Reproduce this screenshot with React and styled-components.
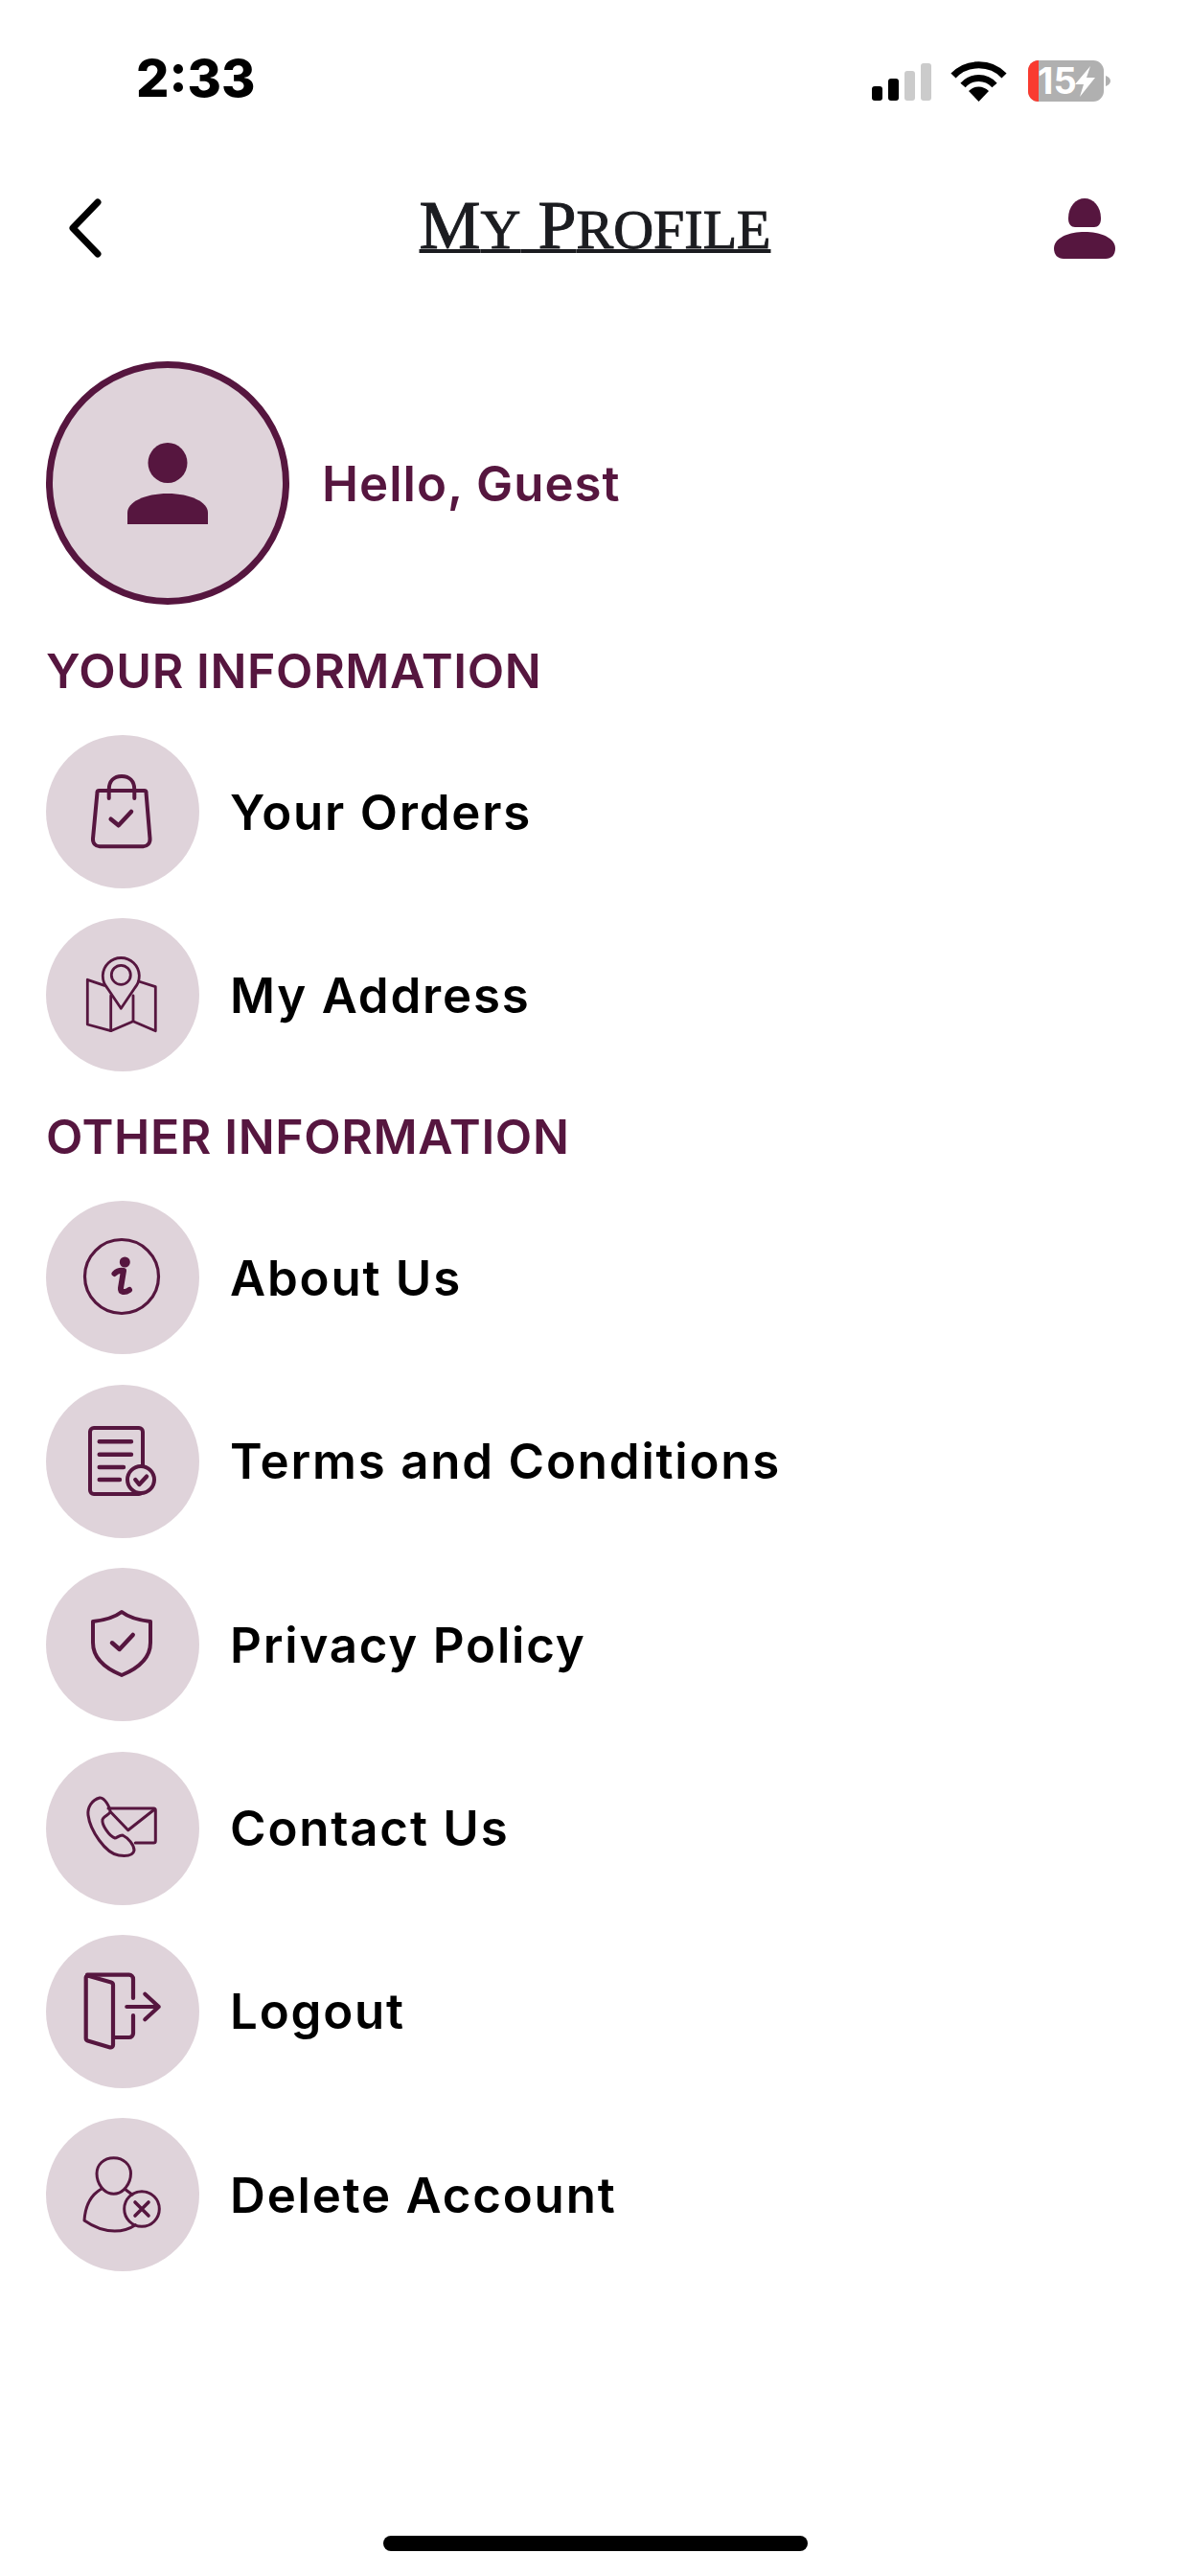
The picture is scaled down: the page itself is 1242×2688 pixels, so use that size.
import React from "react";
import styled, { createGlobalStyle } from "styled-components";

const plum = "#56163f";
const tint = "#dfd3da";

const GlobalStyle = createGlobalStyle`
  html, body {
    margin: 0;
    padding: 0;
    background: #fff;
  }
`;

const Page = styled.div`
  width: 1242px;
  height: 2688px;
  background: #fff;
  display: flex;
  flex-direction: column;
  overflow: hidden;
  font-family: Inter, "Liberation Sans", sans-serif;
`;

const StatusBar = styled.div`
  height: 120px;
  padding: 60px 82px 0 142px;
  box-sizing: border-box;
  display: flex;
  justify-content: space-between;
  align-items: flex-start;
`;

const Clock = styled.div`
  font-size: 54px;
  line-height: 44px;
  font-weight: 800;
  color: #000;
`;

const StatusIcons = styled.svg`
  width: 255px;
  height: 50px;
  display: block;
`;

const Header = styled.div`
  height: 170px;
  padding: 0 78px;
  margin-top: 87px;
  box-sizing: border-box;
  display: grid;
  grid-template-columns: 1fr auto 1fr;
  align-items: start;
`;

const BackIcon = styled.svg`
  display: block;
  margin-left: -8px;
`;

const HeaderEnd = styled.div`
  justify-self: end;
`;

const Title = styled.h1`
  margin: 0;
  font-family: "Liberation Serif", serif;
  font-weight: 400;
  font-size: 72px;
  line-height: 56px;
  color: #1b1c20;
  -webkit-text-stroke: 1px #1b1c20;
  text-decoration: underline;
  text-decoration-thickness: 4px;
  text-underline-offset: 1px;
  text-decoration-skip-ink: none;
`;

const SmallCap = styled.span`
  font-size: 58px;
  text-transform: uppercase;
`;

const Content = styled.div`
  padding: 0 48px;
  display: flex;
  flex-direction: column;
`;

const ProfileRow = styled.div`
  display: flex;
  align-items: center;
  gap: 34px;
`;

const Avatar = styled.div`
  width: 254px;
  height: 254px;
  box-sizing: border-box;
  border: 7px solid ${plum};
  border-radius: 50%;
  background: ${tint};
  display: flex;
  align-items: center;
  justify-content: center;
`;

const Hello = styled.div`
  font-size: 51px;
  font-weight: 600;
  letter-spacing: 1px;
  color: ${plum};
`;

const SectionTitle = styled.h2`
  margin: 0;
  height: 58px;
  margin-top: ${(p) => p.$top}px;
  margin-bottom: 38px;
  font-size: 50px;
  line-height: 58px;
  font-weight: 570;
  letter-spacing: 0.6px;
  color: ${plum};
`;

const List = styled.div`
  display: flex;
  flex-direction: column;
  gap: 31.4px;
`;

const Row = styled.div`
  display: flex;
  align-items: center;
  gap: 32px;
`;

const IconCircle = styled.div`
  width: 160px;
  height: 160px;
  flex: none;
  border-radius: 50%;
  background: ${tint};
`;

const IconSvg = styled.svg`
  width: 160px;
  height: 160px;
  display: block;
  fill: none;
  stroke: ${plum};
  stroke-linecap: round;
  stroke-linejoin: round;
`;

const Label = styled.div`
  font-size: 51px;
  font-weight: 600;
  color: #000;
  letter-spacing: 1.8px;
`;

const HomeBar = styled.div`
  width: 443px;
  height: 16px;
  border-radius: 8px;
  background: #000;
  margin: auto auto 26px;
`;

const BagIcon = () => (
  <IconSvg viewBox="0 0 160 160" strokeWidth="4">
    <path d="M65.7 66V57C65.7 48 71 43 79 43s13.3 5 13.3 14v9" />
    <path d="M55.5 58H102.5a2 2 0 0 1 2 2L108.5 108c.4 5-3 8.2-7 8.2H56c-4 0-7.4-3.2-7-8.2l4.5-48a2 2 0 0 1 2-2z" />
    <path d="M67.7 87.7L75.7 94.3L89 80" strokeWidth="4.5" />
  </IconSvg>
);

const MapIcon = () => (
  <IconSvg viewBox="0 0 160 160" strokeWidth="2.8">
    <path d="M61 70.3L43.3 64.3V111L67.7 117.7L91 107.7L114.3 117.7V71.7L96.7 66" />
    <path d="M67.7 81V117.7M91 81V107.7" />
    <path d="M78.3 94.3L64 73A19 19 0 1 1 92.6 73Z" />
    <circle cx="78.3" cy="59.3" r="10" />
  </IconSvg>
);

const InfoIcon = () => (
  <IconSvg viewBox="0 0 160 160" strokeWidth="3.2">
    <circle cx="79" cy="79" r="38.5" />
    <circle cx="82.3" cy="64" r="5.5" fill={plum} stroke="none" />
    <path d="M71.5 76C74 73.5 78 72.5 81 73L78 91C77.5 95.5 82 96.5 87 93" strokeWidth="6" />
  </IconSvg>
);

const TermsIcon = () => (
  <IconSvg viewBox="0 0 160 160" strokeWidth="4">
    <rect x="46" y="45" width="55" height="69" rx="4" />
    <path d="M55.7 59.3H89M55.7 72.7H89M55.7 86H81M55.7 99H77" strokeWidth="4.4" />
    <circle cx="99" cy="99" r="14" fill={tint} />
    <path d="M93.3 99L97.3 104L105 95.7" strokeWidth="4.4" />
  </IconSvg>
);

const ShieldIcon = () => (
  <IconSvg viewBox="0 0 160 160" strokeWidth="4">
    <path d="M79 46C70 53 58 55 49 56V78C49 95 62 105 79 112C96 105 109 95 109 78V56C100 55 88 53 79 46Z" />
    <path d="M69 78.3L76.7 85L90.7 70" strokeWidth="4.5" />
  </IconSvg>
);

const ContactIcon = () => (
  <IconSvg viewBox="0 0 160 160" strokeWidth="3">
    <path d="M65 59H112.3a2 2 0 0 1 2 2V93a2 2 0 0 1-2 2H93.3" />
    <path d="M67.7 63L85.7 81.7L113.3 60" />
    <path d="M56 48C48 50 43 58 44 66C46 82 62 106 76 108C84 109 91 108 92 103C92 97 86 90 80 87C76 87 74 90 72 90C66 88 58 76 59 71C59 68 65 66 67 63C67 58 61 47 56 48Z" />
  </IconSvg>
);

const LogoutIcon = () => (
  <IconSvg viewBox="0 0 160 160" strokeWidth="4.2">
    <path d="M41.7 44.5a2 2 0 0 1 2.5-1.8L68 49.5a3 3 0 0 1 2 2.8V115a2.5 2.5 0 0 1-3 2.4L43.5 110.5a2.5 2.5 0 0 1-1.8-2.4Z" />
    <path d="M43 41.7H86.7a4.3 4.3 0 0 1 4.3 4.3V66" />
    <path d="M91 84V102.7a4.3 4.3 0 0 1-4.3 4.3H71.7" />
    <path d="M84.3 75H117.7M103.3 61.7L117.7 75L103.3 88.3" />
  </IconSvg>
);

const DeleteIcon = () => (
  <IconSvg viewBox="0 0 160 160" strokeWidth="3">
    <path d="M70.7 41.7C60 41.7 53 49 53 58C53 68 60 79.3 70.7 79.3C81 79.3 88.5 68 88.5 58C88.5 49 81 41.7 70.7 41.7Z" />
    <path d="M58 74C47 80 41 92 40 107C50 114 60 118 71.7 118C80 118 87 116 93.3 111.7" />
    <path d="M83.3 75L90 80" />
    <circle cx="100" cy="95" r="18.3" />
    <path d="M93 88L107 102M107 88L93 102" strokeWidth="3.6" />
  </IconSvg>
);

const infoItems = [
  { label: "Your Orders", Icon: BagIcon },
  { label: "My Address", Icon: MapIcon },
];

const otherItems = [
  { label: "About Us", Icon: InfoIcon },
  { label: "Terms and Conditions", Icon: TermsIcon },
  { label: "Privacy Policy", Icon: ShieldIcon },
  { label: "Contact Us", Icon: ContactIcon },
  { label: "Logout", Icon: LogoutIcon },
  { label: "Delete Account", Icon: DeleteIcon },
];

const MenuList = ({ items }) => (
  <List>
    {items.map(({ label, Icon }) => (
      <Row key={label}>
        <IconCircle>
          <Icon />
        </IconCircle>
        <Label>{label}</Label>
      </Row>
    ))}
  </List>
);

export default function App() {
  return (
    <Page>
      <GlobalStyle />
      <StatusBar>
        <Clock>2:33</Clock>
        <StatusIcons viewBox="0 0 255 50">
          <rect x="5" y="30" width="11" height="15" rx="3" fill="#000" />
          <rect x="22" y="22" width="11" height="23" rx="3" fill="#000" />
          <rect x="39" y="14" width="11" height="31" rx="3" fill="#cbcbcb" />
          <rect x="56" y="6" width="11" height="39" rx="3" fill="#cbcbcb" />
          <path
            d="M90 19C104 4 129 4 143 19"
            fill="none"
            stroke="#000"
            strokeWidth="7"
          />
          <path
            d="M100 29C109 19 124 19 133 29"
            fill="none"
            stroke="#000"
            strokeWidth="7"
          />
          <path d="M106 35C112 29 121 29 127 35L116.5 46Z" fill="#000" />
          <rect x="168" y="3" width="79" height="43" rx="11" fill="#b0b0b0" />
          <path d="M179 3V46C172 46 168 41 168 35V14C168 8 172 3 179 3Z" fill="#f93b30" />
          <path d="M249 19C252 20 254 22 254 24.5C254 27 252 29 249 30Z" fill="#b0b0b0" />
          <text
            x="178"
            y="38"
            fontFamily="Inter, sans-serif"
            fontWeight="700"
            fontSize="38"
            fill="#fff"
          >
            15
          </text>
          <path d="M233 9L217 28H226L222 41L238 21H229Z" fill="#fff" />
        </StatusIcons>
      </StatusBar>
      <Header>
        <BackIcon width="38" height="62" viewBox="0 0 38 62">
          <path
            d="M32 4L6 31L32 58"
            fill="none"
            stroke="#000"
            strokeWidth="7"
            strokeLinecap="round"
            strokeLinejoin="round"
          />
        </BackIcon>
        <Title>
          M<SmallCap>y</SmallCap> P<SmallCap>rofile</SmallCap>
        </Title>
        <HeaderEnd>
          <svg width="64" height="63" viewBox="0 0 64 63" display="block">
            <path
              d="M15 21C15 8 23 0 32 0S49 8 49 21C49 27 46 30 42 30H22C18 30 15 27 15 21Z"
              fill={plum}
            />
            <path
              d="M0 52C0 42 14 35 32 35S64 42 64 52C64 59 60 63 54 63H10C4 63 0 59 0 52Z"
              fill={plum}
            />
          </svg>
        </HeaderEnd>
      </Header>
      <Content>
        <ProfileRow>
          <Avatar>
            <svg width="84" height="85" viewBox="0 0 84 85">
              <ellipse cx="42" cy="21" rx="20.5" ry="21" fill={plum} />
              <path d="M0 85V73C0 62 18 53 42 53S84 62 84 73V85Z" fill={plum} />
            </svg>
          </Avatar>
          <Hello>Hello, Guest</Hello>
        </ProfileRow>
        <SectionTitle $top={40}>YOUR INFORMATION</SectionTitle>
        <MenuList items={infoItems} />
        <SectionTitle $top={39}>OTHER INFORMATION</SectionTitle>
        <MenuList items={otherItems} />
      </Content>
      <HomeBar />
    </Page>
  );
}
